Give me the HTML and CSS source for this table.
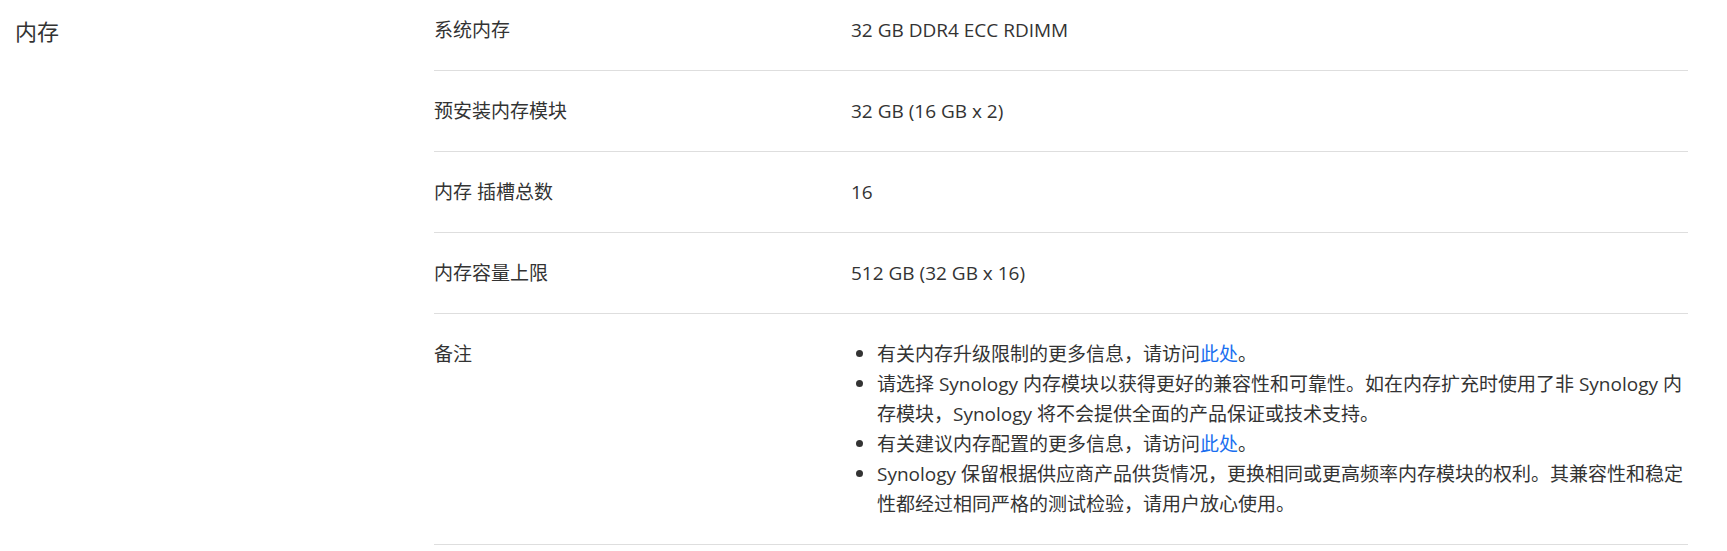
FILE: index.html
```html
<!DOCTYPE html>
<html lang="zh-CN">
<head>
<meta charset="utf-8">
<title>内存</title>
<link rel="stylesheet" href="styles.css">
</head>
<body>
<section class="spec">
  <h2 class="spec-title">内存</h2>
  <div class="spec-table">
    <div class="row first">
      <div class="label">系统内存</div>
      <div class="value">32 GB DDR4 ECC RDIMM</div>
    </div>
    <div class="row">
      <div class="label">预安装内存模块</div>
      <div class="value">32 GB (16 GB x 2)</div>
    </div>
    <div class="row">
      <div class="label">内存 插槽总数</div>
      <div class="value">16</div>
    </div>
    <div class="row">
      <div class="label">内存容量上限</div>
      <div class="value">512 GB (32 GB x 16)</div>
    </div>
    <div class="row">
      <div class="label">备注</div>
      <div class="value">
        <ul class="notes">
          <li>有关内存升级限制的更多信息，请访问<a href="#">此处</a>。</li>
          <li>请选择 Synology 内存模块以获得更好的兼容性和可靠性。如在内存扩充时使用了非 Synology 内存模块，Synology 将不会提供全面的产品保证或技术支持。</li>
          <li>有关建议内存配置的更多信息，请访问<a href="#">此处</a>。</li>
          <li>Synology 保留根据供应商产品供货情况，更换相同或更高频率内存模块的权利。其兼容性和稳定性都经过相同严格的测试检验，请用户放心使用。</li>
        </ul>
      </div>
    </div>
  </div>
</section>
</body>
</html>
```
FILE: styles.css
```css
html, body {
  margin: 0;
  padding: 0;
  background: #fff;
}

body {
  font-family: "Open Sans", "Noto Sans CJK SC", sans-serif;
  color: #333;
  font-size: 19px;
  line-height: 30px;
}

.spec {
  display: grid;
  grid-template-columns: 419px 1254px;
  margin-left: 15px;
}

.spec-title {
  margin: 0;
  padding-top: 16px;
  font-size: 22px;
  font-weight: 400;
  line-height: 30px;
  color: #333;
}

.spec-table {
  display: flex;
  flex-direction: column;
}

.row {
  display: grid;
  grid-template-columns: 417px 1fr;
  padding: 25px 0 25px;
  border-bottom: 1px solid #dedede;
}

.row.first {
  padding-top: 15px;
  padding-bottom: 25px;
}

.label,
.value {
  line-height: 30px;
}

.notes {
  margin: 0;
  padding: 0 0 0 26px;
}

.notes li {
  line-height: 30px;
}

.notes li::marker {
  font-size: 20px;
  color: #333;
}

.notes a {
  color: #1a6ff0;
  text-decoration: none;
}
```
